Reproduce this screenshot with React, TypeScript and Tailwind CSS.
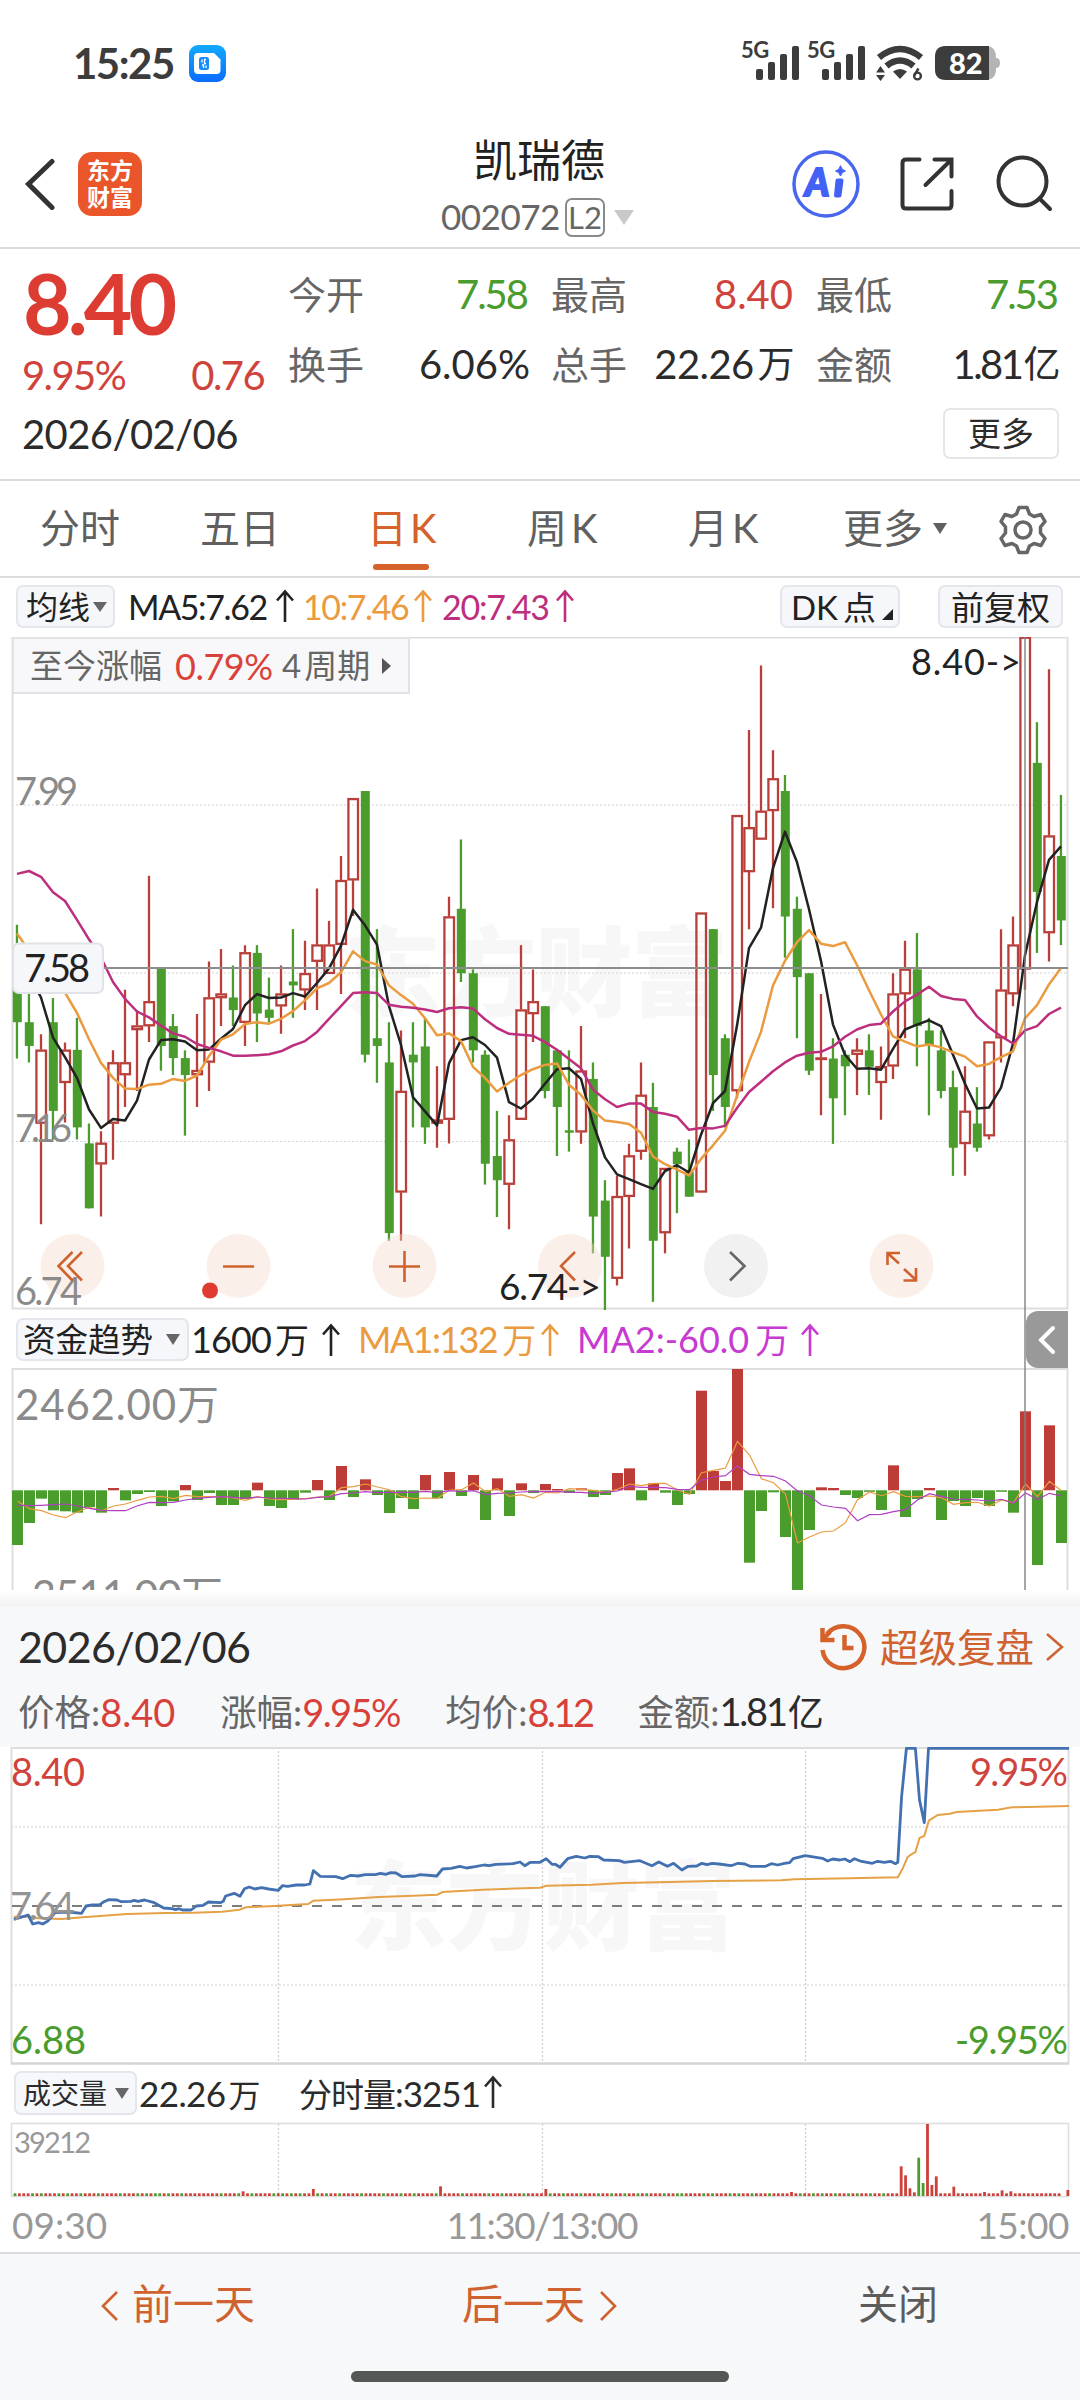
import React from "react";

const RED = "#b9403a";
const GREEN = "#4a9c2d";

/* ---------- K-line data: kind, high, body top, body bottom, low ---------- */
type Candle = [0 | 1, number, number, number, number];
const R = 1;
const G = 0;
const CANDLES: Candle[] = [
  [G, 732, 850, 933, 1008], [G, 820, 933, 982, 1016], [R, 958, 990, 1142, 1350], [G, 883, 933, 1116, 1175],
  [R, 975, 990, 1058, 1140], [G, 924, 990, 1150, 1175], [G, 1142, 1183, 1317, 1317], [R, 1158, 1182, 1226, 1334],
  [R, 991, 1016, 1142, 1217], [R, 866, 1016, 1042, 1108], [R, 908, 940, 949, 1075], [R, 631, 890, 941, 974],
  [G, 823, 823, 982, 1033], [G, 916, 941, 1007, 1042], [G, 991, 1007, 1042, 1167], [R, 916, 1032, 1042, 1108],
  [R, 808, 882, 1016, 1075], [R, 782, 874, 883, 941], [G, 816, 882, 908, 941], [R, 774, 789, 934, 982],
  [G, 774, 790, 915, 974], [G, 841, 907, 924, 934], [R, 816, 874, 900, 957], [G, 741, 849, 857, 924],
  [R, 765, 832, 867, 908], [R, 657, 773, 808, 908], [R, 724, 773, 833, 833], [R, 590, 640, 773, 875],
  [R, 471, 471, 640, 714], [G, 456, 456, 1000, 1016], [G, 741, 966, 982, 1058], [G, 933, 1016, 1368, 1384],
  [R, 950, 1075, 1284, 1384], [G, 933, 1000, 1016, 1150], [G, 924, 983, 1150, 1184], [R, 1024, 1134, 1142, 1192],
  [R, 674, 715, 1134, 1183], [G, 556, 699, 832, 850], [G, 824, 832, 991, 1016], [G, 991, 1000, 1225, 1268],
  [G, 1116, 1209, 1259, 1335], [R, 1125, 1175, 1268, 1360], [R, 774, 907, 1134, 1134], [R, 824, 890, 916, 974],
  [G, 900, 900, 1075, 1090], [G, 991, 991, 1108, 1209], [G, 991, 1156, 1161, 1200], [R, 941, 1033, 1160, 1184],
  [G, 1016, 1050, 1334, 1410], [G, 1259, 1301, 1417, 1527], [R, 1250, 1292, 1462, 1476], [R, 1184, 1208, 1293, 1400],
  [R, 1016, 1083, 1200, 1217], [G, 1058, 1108, 1384, 1510], [R, 1234, 1234, 1368, 1410], [G, 1192, 1200, 1226, 1327],
  [G, 1175, 1242, 1293, 1293], [R, 707, 707, 1284, 1284], [G, 741, 741, 1042, 1116], [G, 958, 966, 1108, 1150],
  [R, 506, 506, 1075, 1090], [R, 330, 531, 623, 741], [R, 197, 497, 556, 556], [R, 372, 430, 497, 698],
  [G, 423, 456, 715, 800], [G, 674, 699, 840, 966], [G, 832, 832, 1033, 1042], [R, 875, 1006, 1010, 1125],
  [G, 966, 1008, 1090, 1184], [G, 991, 1000, 1024, 1125], [R, 966, 990, 1000, 1083], [G, 958, 991, 1025, 1083],
  [R, 983, 1024, 1058, 1134], [R, 832, 874, 1024, 1050], [R, 765, 823, 875, 966], [G, 749, 824, 941, 1024],
  [G, 924, 950, 980, 1125], [G, 950, 991, 1075, 1090], [G, 1033, 1067, 1192, 1250], [R, 1024, 1116, 1184, 1250],
  [G, 1067, 1142, 1192, 1200], [R, 973, 973, 1168, 1175], [R, 741, 866, 966, 1016], [R, 715, 773, 875, 900],
  [R, 138, 138, 824, 866], [G, 314, 398, 664, 790], [R, 205, 548, 749, 808], [G, 464, 590, 723, 774],
];
const MA5 = [
  810, 835, 882, 965, 1005, 1048, 1113, 1151, 1133, 1136, 1095, 1010, 970, 968, 973, 991, 989, 967, 947, 898, 875, 883,
  882, 873, 880, 852, 822, 775, 701, 733, 773, 900, 980, 1088, 1117, 1146, 1018, 970, 964, 980, 1006, 1098, 1111, 1091,
  1060, 1030, 1028, 1050, 1142, 1212, 1247, 1257, 1267, 1277, 1240, 1228, 1243, 1165, 1100, 1075, 940, 780, 738, 615,
  540, 603, 700, 807, 938, 1000, 1029, 1028, 1031, 988, 948, 938, 929, 941, 1000, 1060, 1111, 1109, 1068, 977, 795, 685,
  598, 570,
];
const MA10 = [
  750, 785, 815, 845, 872, 914, 968, 1017, 1048, 1070, 1071, 1062, 1060, 1050, 1054, 1043, 1003, 969, 958, 937, 933,
  936, 926, 910, 888, 863, 852, 830, 787, 807, 814, 857, 877, 895, 925, 960, 956, 972, 1025, 1048, 1076, 1058, 1042,
  1030, 1021, 1018, 1062, 1083, 1115, 1136, 1139, 1143, 1161, 1210, 1226, 1237, 1249, 1215, 1187, 1157, 1085, 1015, 953,
  857, 806, 768, 743, 771, 776, 768, 815, 867, 917, 962, 973, 983, 979, 985, 995, 1004, 1024, 1019, 1005, 993, 925, 898,
  855, 821,
];
const MA20 = [
  627, 621, 633, 665, 683, 722, 762, 800, 850, 885, 911, 923, 940, 956, 963, 978, 986, 993, 1002, 1002, 1001, 999, 993,
  981, 972, 953, 926, 900, 873, 871, 873, 897, 901, 903, 907, 912, 904, 902, 905, 927, 945, 957, 959, 961, 974, 990,
  1009, 1028, 1072, 1092, 1108, 1101, 1101, 1118, 1122, 1128, 1155, 1151, 1152, 1147, 1110, 1077, 1056, 1034, 1016,
  1002, 996, 994, 983, 963, 948, 939, 936, 911, 890, 876, 860, 879, 885, 887, 921, 944, 962, 977, 950, 941, 916, 903,
];
const ky = (v: number) => 570 + v / 2.0632;
const kx = (i: number) => 17 + i * 12;
const kLine = (d: number[]) => d.map((v, i) => `${kx(i)},${ky(v).toFixed(1)}`).join(" ");

/* ---------- Money-flow data ---------- */
const FLOW = [
  735, 669, 596, 631, 634, 638, 621, 638, 564, 601, 582, 576, 618, 604, 555, 600, 579, 615, 615, 597, 548, 618, 624, 600,
  578, 540, 600, 498, 591, 538, 585, 639, 594, 627, 525, 595, 516, 588, 525, 660, 535, 648, 550, 579, 552, 567, 579, 565,
  591, 585, 519, 505, 601, 550, 578, 615, 582, 272, 513, 543, 207, 788, 633, 577, 711, 870, 690, 562, 564, 585, 594, 575,
  630, 496, 651, 597, 564, 660, 603, 618, 594, 618, 575, 638, 334, 795, 376, 729,
];
const FLOW_MA1 = [
  604, 626, 632, 645, 653, 635, 622, 632, 618, 612, 601, 591, 589, 596, 586, 590, 590, 590, 594, 601, 590, 597, 599, 598,
  596, 591, 589, 563, 560, 552, 561, 569, 590, 596, 594, 595, 570, 569, 549, 575, 566, 589, 584, 594, 577, 579, 566, 568,
  571, 578, 568, 552, 557, 550, 550, 570, 583, 518, 511, 504, 424, 465, 536, 548, 582, 729, 711, 696, 693, 668, 599, 576,
  587, 575, 589, 590, 588, 593, 613, 608, 607, 618, 600, 608, 552, 590, 544, 572,
];
const FLOW_MA2 = [
  616, 617, 616, 614, 612, 618, 625, 631, 632, 632, 617, 607, 608, 607, 600, 595, 592, 590, 592, 595, 591, 594, 595, 596,
  597, 592, 590, 581, 579, 575, 578, 577, 577, 577, 574, 578, 572, 575, 572, 584, 580, 579, 576, 574, 575, 574, 577, 577,
  580, 577, 573, 559, 562, 562, 563, 568, 569, 540, 531, 527, 497, 523, 527, 529, 543, 573, 587, 615, 621, 625, 662, 644,
  643, 635, 629, 600, 581, 590, 597, 598, 600, 603, 598, 609, 579, 598, 580, 588,
];
const fy = (v: number) => 1300 + v / 3;
const fLine = (d: number[]) => d.map((v, i) => `${kx(i) + 0.5},${fy(v).toFixed(1)}`).join(" ");

/* ---------- Intraday data: x, y pairs ---------- */
const PRICE = [
  40, 958, 60, 952, 82, 945, 95, 972, 112, 968, 124, 972, 138, 964, 150, 950, 160, 938, 200, 936, 237, 940, 250, 918,
  268, 915, 290, 914, 302, 905, 315, 899, 340, 900, 352, 905, 380, 904, 390, 901, 400, 904, 420, 900, 445, 907, 475, 924,
  500, 926, 510, 929, 520, 926, 530, 930, 555, 930, 570, 918, 590, 916, 605, 906, 640, 908, 648, 904, 655, 888, 680, 880,
  697, 889, 710, 866, 724, 861, 740, 867, 760, 863, 780, 867, 808, 871, 820, 857, 835, 859, 860, 855, 885, 855, 900, 852,
  910, 812, 930, 829, 975, 830, 995, 836, 1018, 826, 1040, 828, 1060, 824, 1090, 824, 1105, 820, 1120, 823, 1135, 818,
  1150, 819, 1168, 830, 1205, 828, 1220, 824, 1268, 828, 1285, 807, 1310, 805, 1335, 799, 1355, 804, 1380, 800, 1405,
  795, 1420, 797, 1440, 793, 1490, 791, 1510, 786, 1524, 797, 1540, 787, 1568, 787, 1586, 776, 1603, 793, 1612, 793,
  1626, 802, 1648, 776, 1673, 769, 1698, 774, 1713, 769, 1738, 770, 1753, 780, 1798, 782, 1813, 787, 1858, 782, 1893,
  797, 1913, 786, 1938, 799, 1956, 790, 1980, 810, 1998, 799, 2023, 798, 2038, 790, 2053, 794, 2068, 790, 2088, 792,
  2123, 797, 2143, 790, 2163, 792, 2178, 799, 2223, 799, 2240, 791, 2258, 795, 2278, 790, 2293, 788, 2303, 776, 2338,
  767, 2388, 775, 2403, 783, 2418, 777, 2438, 780, 2453, 777, 2468, 785, 2481, 776, 2498, 783, 2533, 790, 2548, 784,
  2568, 787, 2586, 784, 2600, 791, 2607, 787, 2618, 590, 2632, 445, 2658, 445, 2670, 600, 2684, 668, 2696, 445, 3104,
  445,
];
const AVG = [
  40, 950, 60, 950, 95, 950, 110, 955, 180, 957, 240, 952, 370, 942, 480, 939, 560, 938, 645, 935, 695, 929, 715, 922,
  808, 917, 895, 912, 910, 902, 1000, 898, 1100, 891, 1200, 887, 1270, 884, 1285, 876, 1400, 869, 1568, 863, 1586, 857,
  1718, 854, 1808, 849, 1948, 846, 2068, 843, 2268, 841, 2308, 838, 2468, 835, 2607, 832, 2620, 808, 2635, 772, 2645,
  764, 2658, 756, 2670, 714, 2684, 708, 2697, 662, 2723, 645, 2758, 641, 2778, 636, 2898, 629, 2938, 622, 3018, 620,
  3104, 618,
];
const tLine = (d: number[]) => {
  const out: string[] = [];
  for (let i = 0; i < d.length; i += 2) out.push(`${(d[i] / 2.9037).toFixed(1)},${(1600 + d[i + 1] / 3).toFixed(1)}`);
  return out.join(" ");
};

/* ---------- Minute volume: default height with named spikes ---------- */
const SPIKES: Record<number, number> = {
  52: 394, 68: 387, 97: 379, 121: 387, 177: 396, 202: 319, 203: 346, 204: 385, 205: 397, 206: 293, 207: 369, 208: 192,
  209: 375, 210: 349, 214: 380, 221: 396, 225: 391, 227: 394, 240: 390,
};
const GREEN_MINUTES = new Set([
  0, 4, 6, 10, 12, 15, 19, 24, 28, 30, 32, 33, 35, 38, 47, 51, 54, 59, 61, 63, 65, 69, 71, 74, 79, 84, 88, 91, 96, 102,
  108, 111, 116, 122, 125, 129, 133, 136, 139, 142, 144, 148, 151, 152, 157, 159, 163, 165, 168, 172, 179, 182, 184, 187,
  190, 192, 195, 198, 206, 207,
]);

const Up = ({ className = "" }: { className?: string }) => (
  <svg className={`shrink-0 ${className}`} width="18" height="34" viewBox="0 0 18 34" fill="none" stroke="currentColor" strokeWidth="2.6">
    <path d="M9 33V3M1 11.500L9 2.500L17 11.500" />
  </svg>
);

const Down = ({ w = 14, h = 11, className = "" }: { w?: number; h?: number; className?: string }) => (
  <svg className={className} width={w} height={h} viewBox="0 0 14 11" preserveAspectRatio="none" fill="currentColor">
    <path d="M0 0H14L7 11Z" />
  </svg>
);

const Signal = () => (
  <div className="relative h-[40px] w-[66px]">
    <span className="absolute top-[-1px] left-0 text-[22px] leading-[20px] font-bold tracking-[-0.5px]">5G</span>
    <svg className="absolute inset-0" width="66" height="40" viewBox="0 0 66 40" fill="currentColor">
      <rect x="15" y="28" width="7" height="11" rx="2" />
      <rect x="27" y="21" width="7" height="18" rx="2" />
      <rect x="39" y="13" width="7" height="26" rx="2" />
      <rect x="51" y="5" width="7" height="34" rx="2" />
    </svg>
  </div>
);

const StatusBar = () => (
  <div className="flex h-[124px] items-start text-[#3c3c3c]">
    <span className="mt-[42px] ml-[73px] w-[116px] text-[42px] leading-[42px] font-bold tracking-[-1.5px]">15:25</span>
    <svg className="mt-[45px]" width="37" height="37" viewBox="0 0 37 37">
      <defs>
        <linearGradient id="sim" x1="0" y1="0" x2="0" y2="1">
          <stop offset="0" stopColor="#12aaff" />
          <stop offset="1" stopColor="#0a6cff" />
        </linearGradient>
      </defs>
      <rect width="37" height="37" rx="9" fill="url(#sim)" />
      <path d="M9 8H25L31.500 14.500V25Q31.500 29 27.500 29H9Q5 29 5 25V12Q5 8 9 8Z" fill="#fff" />
      <rect x="10" y="12" width="10" height="13" rx="2.500" fill="#168bff" />
      <path d="M13 14.500V17.500M17 14.500H15.500V18.500H17M13 20H14.500V23M17 20.500V23" stroke="#fff" strokeWidth="1.300" fill="none" />
    </svg>
    <div className="mt-[41px] ml-[515px] flex">
      <Signal />
      <Signal />
      <svg className="ml-[3px]" width="48" height="40" viewBox="876 41 48 40" fill="none" stroke="currentColor">
        <path d="M879 57.500Q900 40.500 921 57.500" strokeWidth="6.500" />
        <path d="M886.500 66Q900 55 913.500 66" strokeWidth="6.500" />
        <path d="M893 71.500Q900 66.500 907 71.500L900 79Z" fill="currentColor" stroke="none" />
        <path d="M880.500 66L885 72.500H876ZM880.500 81L885 75H876Z" fill="currentColor" stroke="none" />
        <circle cx="917.500" cy="76" r="3.400" strokeWidth="2.400" />
        <path d="M918.500 68.500L914.500 75" strokeWidth="2.400" />
      </svg>
      <div className="relative mt-[5px] ml-[11px] h-[34px] w-[66px]">
        <svg className="absolute inset-0" width="66" height="34" viewBox="0 0 66 34">
          <path d="M11 0H50Q61 0 61 11V12Q65 12 65 17Q65 22 61 22V23Q61 34 50 34H11Q0 34 0 23V11Q0 0 11 0Z" fill="#b4b4b4" />
          <path d="M11 0H54V34H11Q0 34 0 23V11Q0 0 11 0Z" fill="#3c3c3c" />
        </svg>
        <span className="absolute top-[2px] left-[14px] text-[29px] leading-[29px] font-black text-white">82</span>
      </div>
    </div>
  </div>
);

const Header = () => (
  <div className="flex h-[125px] items-start border-b-2 border-[#dcdcdc]">
    <svg className="mt-[34px] ml-[24px]" width="34" height="52" viewBox="24 158 34 52" fill="none" stroke="#333" strokeWidth="5" strokeLinecap="round">
      <path d="M52 161.500L28.500 184L52 207.500" />
    </svg>
    <div className="mt-[28px] ml-[20px] flex h-[64px] w-[64px] flex-col items-center justify-center rounded-[14px] bg-[#ea5529] text-[23px] leading-[27px] font-bold text-white">
      <span>东方</span>
      <span>财富</span>
    </div>
    <div className="ml-[298px] flex w-[200px] flex-col items-start">
      <div className="mt-[12px] ml-[33px] text-[44px] leading-[48px] text-[#222]">凯瑞德</div>
      <div className="mt-[13px] flex items-center text-[#666]">
        <span className="relative top-[-1px] ml-[1px] w-[124px] text-[35px] leading-[40px] tracking-[-0.5px]">002072</span>
        <span className="flex h-[39px] w-[40px] items-center justify-center rounded-[7px] border-2 border-[#8a8a8a] text-[31px] leading-[34px]">L2</span>
        <Down w={20} h={15} className="ml-[9px] text-[#c9c9c9]" />
      </div>
    </div>
    <svg className="mt-[24px] ml-[150px]" width="270" height="74" viewBox="790 148 270 74" fill="none" strokeLinecap="round">
      <circle cx="826" cy="184" r="32" stroke="#4967ee" strokeWidth="3.500" />
      <text x="805" y="195.500" fontSize="37" fontWeight="900" fontStyle="italic" fill="#4261f5" stroke="#4261f5" strokeWidth="2">A</text>
      <path d="M837.500 180.500H841.500L839.500 195.500H836Z" fill="#4261f5" stroke="#4261f5" strokeWidth="4" strokeLinejoin="round" />
      <path d="M840.500 166Q841.500 170 845.500 171Q841.500 172 840.500 176Q839.500 172 835.500 171Q839.500 170 840.500 166Z" fill="#4261f5" stroke="#4261f5" />
      <g stroke="#333" strokeWidth="4">
        <path d="M919.500 159.500H906Q902.500 159.500 902.500 163V205Q902.500 208.500 906 208.500H948Q951.500 208.500 951.500 205V191" />
        <path d="M934.500 159.500H951.500V176.500M950 161L925.500 185" />
        <circle cx="1022.500" cy="181.500" r="24" />
        <path d="M1039.500 198.500L1050 209" />
      </g>
    </svg>
  </div>
);

const Label = ({ children, w }: { children: React.ReactNode; w: string }) => (
  <span className={`${w} shrink-0 text-[38px] text-[#666]`}>{children}</span>
);

const Quote = () => (
  <div className="flex h-[232px] border-b-2 border-[#dcdcdc] text-[40px] text-[#2b2b2b]">
    <div className="flex w-[264px] shrink-0 flex-col pl-[22px]">
      <div className="mt-[14px] ml-[1px] text-[84px] leading-[80px] font-bold tracking-[-4px] text-[#dd3c33]">8.40</div>
      <div className="mt-[10px] flex justify-between leading-[44px] text-[#d0433c]">
        <span className="tracking-[-1.6px]">9.95%</span>
        <span className="tracking-[-1.6px]">0.76</span>
      </div>
      <div className="mt-[15px] leading-[44px] tracking-[-0.6px]">2026/02/06</div>
    </div>
    <div className="flex w-[816px] flex-col pl-[24px]">
      <div className="mt-[22px] flex h-[46px] items-center leading-[46px]">
        <Label w="w-[84px]">今开</Label>
        <span className="w-[155px] text-right tracking-[-2px] text-[#4a9c2d]">7.58</span>
        <Label w="ml-[24px] w-[84px]">最高</Label>
        <span className="w-[158px] text-right text-[#d0433c]">8.40</span>
        <Label w="ml-[23px] w-[84px]">最低</Label>
        <span className="w-[157px] text-right tracking-[-2px] text-[#4a9c2d]">7.53</span>
      </div>
      <div className="mt-[24px] flex h-[46px] items-center leading-[46px]">
        <Label w="w-[84px]">换手</Label>
        <span className="w-[158px] text-right">6.06%</span>
        <Label w="ml-[21px] w-[84px]">总手</Label>
        <span className="flex w-[159px] justify-end text-right tracking-[-0.6px]">22.26<span className="ml-[4px] text-[37px]">万</span></span>
        <Label w="ml-[22px] w-[84px]">金额</Label>
        <span className="flex w-[158px] justify-end text-right tracking-[-2.5px]">1.81<span className="ml-[2px] text-[37px]">亿</span></span>
      </div>
      <div className="mt-[21px] ml-[655px] flex h-[51px] w-[116px] items-center justify-center rounded-[7px] border-2 border-[#e4e6ea] text-[33px]">更多</div>
    </div>
  </div>
);

const Tabs = () => (
  <div className="flex h-[97px] items-start border-b-2 border-[#dcdcdc] pt-[21px] text-[40px] leading-[52px] text-[#606060]">
    <span className="ml-[40px] w-[160px]">分时</span>
    <span className="w-[167px]">五日</span>
    <span className="flex w-[160px] flex-col items-start text-[#d4622a]">
      <span>日<span className="ml-[3px]">K</span></span>
      <span className="mt-[10px] ml-[6px] h-[6px] w-[56px] rounded-full bg-[#d4622a]" />
    </span>
    <span className="w-[161px]">周<span className="ml-[4px]">K</span></span>
    <span className="w-[155px]">月<span className="ml-[4px]">K</span></span>
    <span className="w-[90px]">更多</span>
    <Down w={14} h={11} className="mt-[21px]" />
    <svg className="mt-[3px] ml-[52px]" width="48" height="50" viewBox="0 0 48 50" fill="none" stroke="#666" strokeWidth="3.500" strokeLinejoin="round">
      <path d="M20 2.500H28L30.500 9L35 11.500L42 9.500L46 16.500L41.500 22V28L46 33.500L42 40.500L35 38.500L30.500 41L28 47.500H20L17.500 41L13 38.500L6 40.500L2 33.500L6.500 28V22L2 16.500L6 9.500L13 11.500L17.500 9Z" />
      <circle cx="24" cy="25" r="8" />
    </svg>
  </div>
);

const MaBar = () => (
  <div className="flex h-[59px] items-start pt-[7px] text-[34px] leading-[44px] text-[#222]">
    <span className="ml-[16px] flex h-[43px] w-[99px] shrink-0 items-center rounded-[7px] border-2 border-[#e3e6ea] bg-[#f6f7fa] pl-[8px] text-[32px]">
      均线
      <Down w={14} h={10} className="ml-[3px] text-[#666]" />
    </span>
    <span className="ml-[13px] w-[148px] shrink-0 tracking-[-1.4px]">MA5:7.62</span>
    <Up className="mt-[4px] mr-[9px]" />
    <span className="w-[111px] shrink-0 tracking-[-1.4px] text-[#eb9b3f]">10:7.46</span>
    <Up className="mt-[4px] mr-[10px] text-[#eb9b3f]" />
    <span className="w-[114px] shrink-0 tracking-[-1.2px] text-[#bd2f7e]">20:7.43</span>
    <Up className="mt-[4px] text-[#bd2f7e]" />
    <span className="relative ml-[206px] h-[43px] w-[120px] shrink-0 rounded-[7px] border-2 border-[#e3e6ea] bg-[#f6f7fa] pl-[9px] text-[33px] leading-[40px]">
      DK<span className="ml-[5px]">点</span>
      <svg className="absolute right-[5px] bottom-[6px]" width="11" height="11" viewBox="0 0 11 11">
        <path d="M11 0V11H0Z" fill="#222" />
      </svg>
    </span>
    <span className="ml-[38px] flex h-[43px] w-[125px] shrink-0 items-center justify-center rounded-[7px] border-2 border-[#e3e6ea] bg-[#f6f7fa] text-[33px]">前复权</span>
  </div>
);

const Grid = ({ y }: { y: number }) => <line x1="12" x2="1068" y1={y} y2={y} stroke="#d4d4d4" strokeWidth="1.200" strokeDasharray="2 2" />;

const KChart = () => (
  <div className="relative h-[673px]">
    <svg className="block" width="1080" height="673" viewBox="0 637 1080 673">
      <text x="344" y="1008" fontSize="97" fontWeight="900" fill="#f7f7f7" textLength="384">东方财富</text>
      <rect x="12.500" y="637.500" width="1055" height="671" fill="none" stroke="#dedede" strokeWidth="2" />
      <Grid y={805} />
      <Grid y={973} />
      <Grid y={1141.5} />
      {CANDLES.map(([up, h, t, b, l], i) => {
        const x = kx(i);
        const col = up ? RED : GREEN;
        const top = ky(t);
        const bot = ky(b);
        return up ? (
          <g key={i} stroke={col} strokeWidth="2.300" fill="none">
            <path d={`M${x} ${ky(h)}V${top}M${x} ${bot}V${ky(l)}`} />
            <rect x={x - 4.6} y={top + 0.8} width={9.6} height={Math.max(0.6, bot - top - 1.6)} />
          </g>
        ) : (
          <g key={i} fill={col}>
            <rect x={x - 1.2} y={ky(h)} width={2.3} height={ky(l) - ky(h)} />
            <rect x={x - 4.2} y={top} width={9} height={Math.max(2, bot - top)} />
          </g>
        );
      })}
      <g fill="none" strokeWidth="2.500" strokeLinejoin="round">
        <polyline points={kLine(MA5)} stroke="#222" />
        <polyline points={kLine(MA10)} stroke="#eb9b3f" />
        <polyline points={kLine(MA20)} stroke="#bd2f7e" />
      </g>
      <line x1="12" x2="1068" y1="968" y2="968" stroke="#8c8c8c" strokeWidth="1.800" />
      <rect x="13" y="943.500" width="90" height="49.500" rx="6" fill="#f6f7fa" stroke="#e0e3e7" strokeWidth="2" />
      <g fontSize="38" fill="#222">
        <text x="24" y="982" textLength="66">7.58</text>
        <text x="911" y="675" fontSize="36" textLength="110">{"8.40->"}</text>
      </g>
      <g>
        {[72.5, 238.5, 404.5, 570, 901.5].map((x) => (
          <circle key={x} cx={x} cy="1266" r="32" fill="#f6dccb" fillOpacity="0.420" />
        ))}
        <circle cx="736" cy="1266" r="32" fill="#e4e4e4" fillOpacity="0.500" />
      </g>
      <g fontSize="38" fill="#8a8a8a">
        <text x="15" y="805" textLength="63">7.99</text>
        <text x="15" y="1142" textLength="57">7.16</text>
        <text x="15" y="1305" textLength="67">6.74</text>
      </g>
      <g fill="none" stroke="#cf622e" strokeWidth="2.600">
        <path d="M72.500 1252L58.500 1266L72.500 1280.500M82 1252L68 1266L82 1280.500" />
        <path d="M223 1266.500H254M389 1266.500H420M404.500 1251V1282M575 1252L561 1266L575 1280.500" />
        <path d="M900 1253H887.500V1265M888 1253.500L899 1263.500M904 1269L915.500 1279.500M916 1268V1280.500H903.500" />
        <path d="M730 1252L744.500 1266L730 1280.500" stroke="#666" />
      </g>
      <text x="499" y="1300" fontSize="37" fill="#222" textLength="102">{"6.74->"}</text>
      <circle cx="210" cy="1290.500" r="8" fill="#e03b31" />
    </svg>
    <div className="absolute top-0 left-[12px] flex h-[57px] w-[398px] items-center border-2 border-[#e2e3e6] bg-[#f8f8fa] pl-[16px] text-[33px] text-[#666]">
      <span>至今涨幅</span>
      <span className="ml-[13px] w-[107px] text-[36px] tracking-[-0.5px] text-[#d8423a]">0.79%</span>
      <span>4<span className="ml-[3px]">周期</span></span>
      <svg className="ml-[12px]" width="9" height="16" viewBox="0 0 9 16" fill="#555"><path d="M0 0L9 8L0 16Z" /></svg>
    </div>
  </div>
);

const FlowBar = () => (
  <div className="flex h-[58px] items-start pt-[8px] text-[36px] leading-[43px] text-[#222]">
    <span className="ml-[16px] flex h-[43px] w-[173px] shrink-0 items-center rounded-[7px] border-2 border-[#e3e6ea] bg-[#f6f7fa] pl-[5px] text-[32.500px]">
      资金趋势
      <Down w={14} h={11} className="ml-[13px] text-[#666]" />
    </span>
    <span className="ml-[2px] w-[131px] shrink-0 tracking-[-0.9px]">1600<span className="ml-[4px] text-[34px]">万</span></span>
    <Up className="mt-[5px] mr-[18px]" />
    <span className="w-[183px] shrink-0 tracking-[-1.6px] text-[#eb9b3f]">MA1:132<span className="ml-[5px] text-[34px]">万</span></span>
    <Up className="mt-[5px] mr-[18px] text-[#eb9b3f]" />
    <span className="w-[224px] shrink-0 text-[#c63ad2]">MA2:-60.0<span className="ml-[6px] text-[34px]">万</span></span>
    <Up className="mt-[5px] text-[#c63ad2]" />
  </div>
);

const FlowChart = () => (
  <svg className="block" width="1080" height="222" viewBox="0 1368 1080 222">
    <path d="M12.500 1600V1369H1067.500V1600" fill="none" stroke="#dedede" strokeWidth="2" />
    <text x="15" y="1420" fontSize="42" fill="#8a8a8a" textLength="204">2462.00万</text>
    <text x="17" y="1611" fontSize="42" fill="#8a8a8a" textLength="206">-3511.00万</text>
    {FLOW.map((v, i) => (
      <rect
        key={i}
        x={kx(i) - 5}
        y={v < 570 ? fy(v) : 1490.3}
        width={11}
        height={Math.max(1.5, Math.abs(fy(v) - 1490.3))}
        fill={v < 570 ? "#be3c37" : GREEN}
      />
    ))}
    <polyline points={fLine(FLOW_MA1)} fill="none" stroke="#eb9b3f" strokeWidth="1.200" />
    <polyline points={fLine(FLOW_MA2)} fill="none" stroke="#b03fc4" strokeWidth="1.200" />
  </svg>
);

const ReplayHeader = () => (
  <div className="flex h-[141px] flex-col bg-[#f7f8fa] pl-[18px]">
    <div className="mt-[17px] flex h-[48px] items-center text-[43px] leading-[48px] text-[#2b2b2b]">
      <span className="w-[800px] tracking-[-0.6px]">2026/02/06</span>
      <svg width="50" height="50" viewBox="817 1622 50 50" fill="none" stroke="#d4622a" strokeWidth="4.500">
        <path d="M821.500 1650A21 21 0 1 0 826 1634" />
        <path d="M821.500 1628V1640H833.500" />
        <path d="M829 1632L823 1638" />
        <path d="M843.500 1635V1648H852.500" />
      </svg>
      <span className="ml-[12px] w-[166px] text-[38.500px] text-[#cf622e]">超级复盘</span>
      <svg width="18" height="30" viewBox="0 0 18 30" fill="none" stroke="#cf622e" strokeWidth="2.500"><path d="M1 2L16 15L1 28" /></svg>
    </div>
    <div className="mt-[16px] flex items-center text-[38px] leading-[48px] text-[#d8403a]">
      <span className="text-[36.500px] text-[#666]">价格:</span>
      <span className="w-[120px]">8.40</span>
      <span className="text-[36.500px] text-[#666]">涨幅:</span>
      <span className="w-[143px] tracking-[-1.6px]">9.95%</span>
      <span className="text-[36.500px] text-[#666]">均价:</span>
      <span className="w-[110px] tracking-[-2.5px]">8.12</span>
      <span className="text-[36.500px] text-[#666]">金额:</span>
      <span className="tracking-[-2.2px] text-[#2b2b2b]">1.81<span className="ml-[2px] text-[36px]">亿</span></span>
    </div>
  </div>
);

const DayChart = () => (
  <svg className="block" width="1080" height="318" viewBox="0 1747 1080 318">
    <text x="350" y="1942" fontSize="97" fontWeight="900" fill="#f7f7f7" textLength="386">东方财富</text>
    <g stroke="#cfcfcf" strokeWidth="1.200" strokeDasharray="2 2">
      <path d="M11 1827H1068M11 1985H1068M278.500 1747V2063M542.500 1747V2063M805.500 1747V2063" />
    </g>
    <path d="M11.500 2063V1748H1068.500V2063" fill="none" stroke="#dedede" strokeWidth="2" />
    <path d="M11 2063.500H1069" stroke="#d4d4d4" strokeWidth="2.500" />
    <path d="M12 1906H1067" stroke="#7d7d7d" strokeWidth="1.800" strokeDasharray="10 10" />
    <polyline points={tLine(AVG)} fill="none" stroke="#e5a145" strokeWidth="2" />
    <polyline points={tLine(PRICE)} fill="none" stroke="#4270b0" strokeWidth="2.800" strokeLinejoin="round" />
    <g fontSize="38">
      <text x="11" y="1786" fill="#d0433c" textLength="74">8.40</text>
      <text x="10" y="1920" fill="#949494" textLength="65">7.64</text>
      <text x="11" y="2054" fill="#4a9c2d" textLength="75">6.88</text>
      <text x="1068" y="1786" fill="#d0433c" textAnchor="end" textLength="98">9.95%</text>
      <text x="1068" y="2054" fill="#4a9c2d" textAnchor="end" textLength="113">-9.95%</text>
    </g>
  </svg>
);

const VolumeBar = () => (
  <div className="flex h-[57px] items-start pt-[6px] text-[35px] leading-[44px] text-[#2b2b2b]">
    <span className="ml-[14px] flex h-[44px] w-[123px] shrink-0 items-center rounded-[7px] border-2 border-[#e3e6ea] bg-[#f6f7fa] pl-[7px] text-[28px]">
      成交量
      <Down w={14} h={11} className="ml-[8px] text-[#666]" />
    </span>
    <span className="ml-[2px] w-[160px] shrink-0 tracking-[-0.6px]">22.26<span className="ml-[3px] text-[32px]">万</span></span>
    <span className="w-[186px] shrink-0 tracking-[-1px]"><span className="text-[33px]">分时量</span>:3251</span>
    <Up className="mt-[4px] ml-[-1px]" />
  </div>
);

const VolumeChart = () => (
  <svg className="block" width="1080" height="76" viewBox="0 2122 1080 76">
    <path d="M278.500 2124V2196M542.500 2124V2196M805.500 2124V2196" stroke="#cfcfcf" strokeWidth="1.200" strokeDasharray="2 2" />
    <rect x="11.500" y="2123.500" width="1057" height="73" fill="none" stroke="#dedede" strokeWidth="1.600" />
    <text x="14" y="2153" fontSize="29" fill="#999" textLength="77">39212</text>
    {Array.from({ length: 241 }, (_, i) => {
      if (i === 239) return null;
      const top = 2060 + (SPIKES[i] ?? 400) / 3;
      return <rect key={i} x={13.6 + i * 4.387} y={top} width={2.8} height={2196 - top} fill={GREEN_MINUTES.has(i) ? "#4a9c2d" : "#cc4039"} />;
    })}
  </svg>
);

const Footer = () => (
  <div className="flex h-[148px] flex-col items-center border-t-2 border-[#d9dbde] bg-[#f7f8fa]">
    <div className="mt-[24px] flex h-[52px] w-full items-center text-[41px] leading-[52px] text-[#cf622e]">
      <svg className="mt-[3px] ml-[101px]" width="18" height="32" viewBox="0 0 18 32" fill="none" stroke="currentColor" strokeWidth="2.600"><path d="M16 2L2 16L16 30" /></svg>
      <span className="ml-[13px] w-[330px]">前一天</span>
      <span className="w-[137px]">后一天</span>
      <svg className="mt-[3px]" width="18" height="32" viewBox="0 0 18 32" fill="none" stroke="currentColor" strokeWidth="2.600"><path d="M2 2L16 16L2 30" /></svg>
      <span className="ml-[241px] text-[40px] text-[#5c5c5c]">关闭</span>
    </div>
    <div className="mt-[41px] h-[11px] w-[378px] rounded-full bg-[#555656]" />
  </div>
);

export default function App() {
  return (
    <div className="h-[2400px] w-[1080px] overflow-hidden bg-white font-['Lato','Noto_Sans_CJK_SC',sans-serif] whitespace-nowrap">
      <StatusBar />
      <Header />
      <Quote />
      <Tabs />
      <MaBar />
      <div className="relative">
        <KChart />
        <FlowBar />
        <FlowChart />
        <div className="absolute top-0 left-[1024px] h-full w-[2px] bg-[#808080]/70" />
        <div className="absolute top-[674px] left-[1026px] flex h-[57px] w-[42px] items-center justify-center rounded-l-[12px] bg-[#999]">
          <svg width="18" height="30" viewBox="0 0 18 30" fill="none" stroke="#fff" strokeWidth="4" strokeLinecap="round"><path d="M15 3L3 15L15 27" /></svg>
        </div>
      </div>
      <div className="h-[16px] bg-linear-to-b from-white to-[#f2f2f2]" />
      <ReplayHeader />
      <DayChart />
      <VolumeBar />
      <VolumeChart />
      <div className="flex h-[54px] items-center justify-between pr-[11px] pl-[12px] text-[37px] text-[#999]">
        <span>09:30</span>
        <span className="tracking-[-1.5px]">11:30/13:00</span>
        <span className="tracking-[-0.5px]">15:00</span>
      </div>
      <Footer />
    </div>
  );
}
